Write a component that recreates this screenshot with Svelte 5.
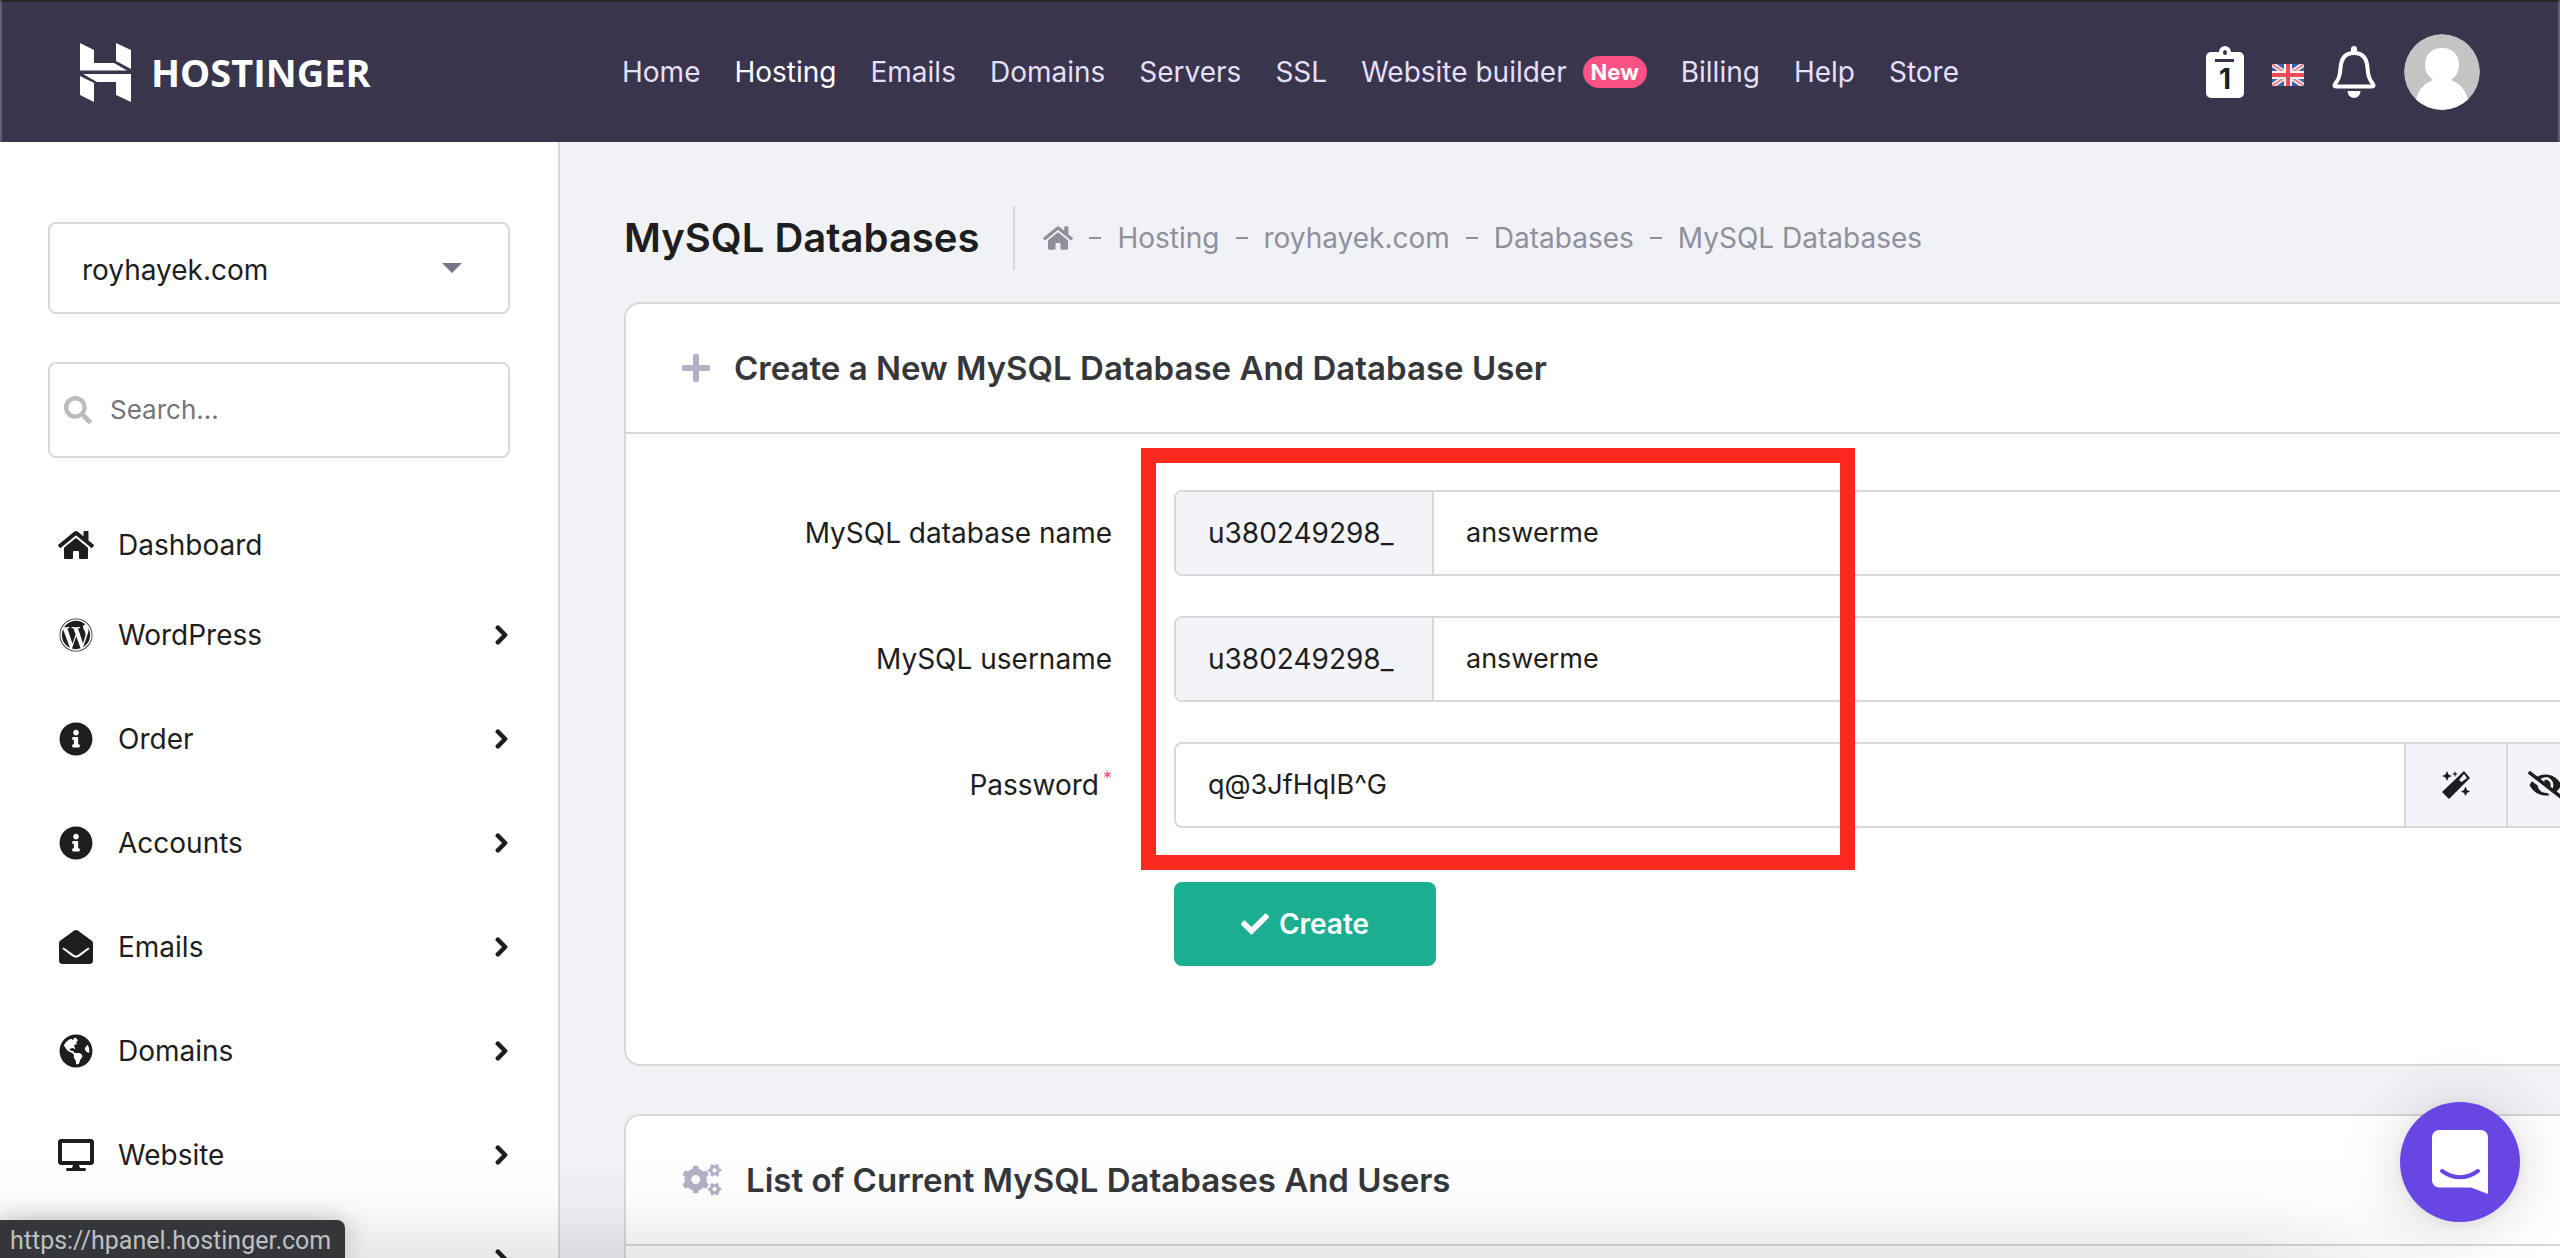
<script>
  const topLinks = [
    { label: 'Home' },
    { label: 'Hosting', active: true },
    { label: 'Emails' },
    { label: 'Domains' },
    { label: 'Servers' },
    { label: 'SSL' },
    { label: 'Website builder', badge: 'New' },
    { label: 'Billing' },
    { label: 'Help' },
    { label: 'Store' }
  ];

  const icons = {
    home: {
      box: '0 0 576 512',
      d: 'M280.37 148.26L96 300.11V464a16 16 0 0 0 16 16l112.06-.29a16 16 0 0 0 15.92-16V368a16 16 0 0 1 16-16h64a16 16 0 0 1 16 16v95.64a16 16 0 0 0 16 16.05L464 480a16 16 0 0 0 16-16V300L295.67 148.26a12.19 12.19 0 0 0-15.3 0zM571.6 251.47L488 182.56V44.05a12 12 0 0 0-12-12h-56a12 12 0 0 0-12 12v72.61L318.47 43a48 48 0 0 0-61 0L4.34 251.47a12 12 0 0 0-1.6 16.9l25.5 31A12 12 0 0 0 45.15 301l235.22-193.74a12.19 12.19 0 0 1 15.3 0L530.9 301a12 12 0 0 0 16.9-1.6l25.5-31a12 12 0 0 0-1.7-16.93z'
    },
    wordpress: {
      box: '0 0 512 512',
      d: 'M61.7 169.4l101.5 278C92.2 413 43.3 340.2 43.3 256c0-30.9 6.6-60.1 18.4-86.6zm337.9 75.9c0-26.3-9.4-44.5-17.5-58.7-10.8-17.5-20.9-32.4-20.9-49.9 0-19.6 14.8-37.8 35.7-37.8.9 0 1.8.1 2.8.2-37.9-34.7-88.3-55.9-143.7-55.9-74.3 0-139.7 38.1-177.8 95.9 5 .2 9.7.3 13.7.3 22.2 0 56.7-2.7 56.7-2.7 11.5-.7 12.8 16.2 1.4 17.5 0 0-11.5 1.3-24.3 2l77.5 230.4L249.8 247l-33.1-90.8c-11.5-.7-22.3-2-22.3-2-11.5-.7-10.1-18.2 1.3-17.5 0 0 35.1 2.7 56 2.7 22.2 0 56.7-2.7 56.7-2.7 11.5-.7 12.8 16.2 1.4 17.5 0 0-11.5 1.3-24.3 2l76.9 228.7 21.2-70.9c9-29.4 16-50.5 16-68.7zm-139.9 29.3l-63.8 185.5c19.1 5.6 39.2 8.7 60.1 8.7 24.8 0 48.5-4.3 70.6-12.1-.6-.9-1.1-1.9-1.5-2.9l-65.4-179.2zm183-120.7c.9 6.8 1.4 14 1.4 21.9 0 21.6-4 45.8-16.2 76.2l-65 187.9C426.2 403 468.7 334.5 468.7 256c0-37-9.4-71.8-26-102.1zM504 256c0 136.8-111.3 248-248 248C119.2 504 8 392.7 8 256 8 119.2 119.2 8 256 8c136.7 0 248 111.2 248 248zm-11.4 0c0-130.5-106.2-236.6-236.6-236.6C125.5 19.4 19.4 125.5 19.4 256S125.6 492.6 256 492.6c130.5 0 236.6-106.1 236.6-236.6z'
    },
    info: {
      box: '0 0 512 512',
      d: 'M256 8C119.043 8 8 119.083 8 256c0 136.997 111.043 248 248 248s248-111.003 248-248C504 119.083 392.957 8 256 8zm0 110c23.196 0 42 18.804 42 42s-18.804 42-42 42-42-18.804-42-42 18.804-42 42-42zm56 254c0 6.627-5.373 12-12 12h-88c-6.627 0-12-5.373-12-12v-24c0-6.627 5.373-12 12-12h12v-64h-12c-6.627 0-12-5.373-12-12v-24c0-6.627 5.373-12 12-12h64c6.627 0 12 5.373 12 12v100h12c6.627 0 12 5.373 12 12v24z'
    },
    envelope: {
      box: '0 0 512 512',
      d: 'M512 464c0 26.51-21.49 48-48 48H48c-26.51 0-48-21.49-48-48V200.724a48 48 0 0 1 18.387-37.776c24.913-19.529 45.501-35.365 164.2-121.511C199.412 29.17 232.797-.347 256 .003c23.198-.354 56.596 29.172 73.413 41.433 118.687 86.137 139.303 101.995 164.2 121.512A48 48 0 0 1 512 200.724V464zm-65.666-196.605c-2.563-3.728-7.7-4.595-11.339-1.907-22.845 16.873-55.462 40.705-105.582 77.079-16.825 12.266-50.21 41.781-73.413 41.43-23.211.344-56.559-29.143-73.413-41.43-50.114-36.37-82.734-60.204-105.582-77.079-3.639-2.688-8.776-1.821-11.339 1.907l-9.072 13.196a7.998 7.998 0 0 0 1.839 10.967c22.887 16.899 55.454 40.69 105.303 76.868 20.274 14.781 56.524 47.813 92.264 47.573 35.724.242 71.961-32.771 92.263-47.573 49.85-36.179 82.418-59.97 105.303-76.868a7.998 7.998 0 0 0 1.839-10.967l-9.071-13.196z'
    },
    globe: {
      box: '-8 0 512 512',
      d: 'M248 8C111.03 8 0 119.03 0 256s111.03 248 248 248 248-111.03 248-248S384.97 8 248 8zm82.29 357.6c-3.9 3.88-7.99 7.95-11.31 11.28-2.99 3-5.1 6.7-6.17 10.71-1.51 5.66-2.73 11.38-4.77 16.87l-17.39 46.85c-13.76 3-28 4.69-42.65 4.69v-27.38c1.69-12.62-7.64-36.26-22.63-51.25-6-6-9.37-14.14-9.37-22.63v-32.01c0-11.64-6.27-22.34-16.46-27.97-14.37-7.95-34.81-19.06-48.81-26.11-11.48-5.78-22.1-13.14-31.65-21.75l-.8-.72a114.792 114.792 0 0 1-18.06-20.74c-9.38-13.77-24.66-36.42-34.59-51.14 20.47-45.5 57.36-82.04 103.2-101.89l24.01 12.01C203.48 89.74 216 82.01 216 70.11v-11.3c7.99-1.29 16.12-2.11 24.39-2.42l28.3 28.3c6.25 6.25 6.25 16.38 0 22.63L264 112l-10.34 10.34c-3.12 3.12-3.12 8.19 0 11.31l4.69 4.69c3.12 3.12 3.12 8.19 0 11.31l-8 8a8.008 8.008 0 0 1-5.66 2.34h-8.99c-2.08 0-4.08.81-5.58 2.27l-9.92 9.65a8.008 8.008 0 0 0-1.58 9.31l15.59 31.19c2.66 5.32-1.21 11.58-7.15 11.58h-5.64c-1.93 0-3.79-.7-5.24-1.96l-9.28-8.06a16.017 16.017 0 0 0-15.55-3.1l-31.17 10.39a11.95 11.95 0 0 0-8.17 11.34c0 4.53 2.56 8.66 6.61 10.69l11.08 5.54c9.41 4.71 19.79 7.16 30.31 7.16s22.59 27.29 32 32h66.75c8.49 0 16.62 3.37 22.63 9.37l13.69 13.69a30.503 30.503 0 0 1 8.93 21.57 46.536 46.536 0 0 1-13.72 32.98zM417 274.25c-5.79-1.45-10.84-5-14.15-9.97l-17.98-26.97a23.97 23.97 0 0 1 0-26.62l19.59-29.38c2.32-3.47 5.5-6.29 9.24-8.15l12.98-6.49C440.2 193.59 448 223.87 448 256c0 8.67-.74 17.16-1.82 25.54L417 274.25z'
    },
    desktop: {
      box: '0 0 576 512',
      d: 'M528 0H48C21.5 0 0 21.5 0 48v320c0 26.5 21.5 48 48 48h192l-16 48h-72c-13.3 0-24 10.7-24 24s10.7 24 24 24h272c13.3 0 24-10.7 24-24s-10.7-24-24-24h-72l-16-48h192c26.5 0 48-21.5 48-48V48c0-26.5-21.5-48-48-48zm-16 352H64V64h448v288z'
    },
    search: {
      box: '0 0 512 512',
      d: 'M505 442.7L405.3 343c-4.5-4.5-10.6-7-17-7H372c27.6-35.3 44-79.7 44-128C416 93.1 322.9 0 208 0S0 93.1 0 208s93.1 208 208 208c48.3 0 92.7-16.4 128-44v16.3c0 6.4 2.5 12.5 7 17l99.7 99.7c9.4 9.4 24.6 9.4 33.9 0l28.3-28.3c9.4-9.4 9.4-24.6.1-34zM208 336c-70.7 0-128-57.2-128-128 0-70.7 57.2-128 128-128 70.7 0 128 57.2 128 128 0 70.7-57.2 128-128 128z'
    },
    check: {
      box: '0 0 512 512',
      d: 'M173.898 439.404l-166.4-166.4c-9.997-9.997-9.997-26.206 0-36.204l36.203-36.204c9.997-9.998 26.207-9.998 36.204 0L192 312.69 432.095 72.596c9.997-9.997 26.207-9.997 36.204 0l36.203 36.204c9.997 9.997 9.997 26.206 0 36.204l-294.4 294.401c-9.998 9.997-26.207 9.997-36.204-.001z'
    },
    plus: {
      box: '0 0 448 512',
      d: 'M416 208H272V64c0-17.67-14.33-32-32-32h-32c-17.67 0-32 14.33-32 32v144H32c-17.67 0-32 14.33-32 32v32c0 17.67 14.33 32 32 32h144v144c0 17.67 14.33 32 32 32h32c17.67 0 32-14.33 32-32V304h144c17.67 0 32-14.33 32-32v-32c0-17.67-14.33-32-32-32z'
    },
    eyeSlash: {
      box: '0 0 640 512',
      d: 'M320 400c-75.85 0-137.25-58.71-142.9-133.11L72.2 185.82c-13.79 17.3-26.48 35.59-36.72 55.59a32.35 32.35 0 0 0 0 29.19C89.71 376.41 197.07 448 320 448c26.91 0 52.87-4 77.89-10.46L346 397.39a144.13 144.13 0 0 1-26 2.61zm313.82 58.1l-110.55-85.44a331.25 331.25 0 0 0 81.25-102.07 32.35 32.35 0 0 0 0-29.19C550.29 135.59 442.93 64 320 64a308.15 308.15 0 0 0-147.32 37.7L45.46 3.37A16 16 0 0 0 23 6.18L3.37 31.45A16 16 0 0 0 6.18 53.9l588.36 454.73a16 16 0 0 0 22.46-2.81l19.64-25.27a16 16 0 0 0-2.82-22.45zm-183.72-142l-39.3-30.38A94.75 94.75 0 0 0 416 256a94.76 94.76 0 0 0-121.31-92.21A47.65 47.65 0 0 1 304 192a46.64 46.64 0 0 1-1.54 10l-73.61-56.89A142.31 142.31 0 0 1 320 112a143.92 143.92 0 0 1 144 144c0 21.63-5.29 41.79-13.9 60.11z'
    }
  };

  const sideLinks = [
    { label: 'Dashboard', icon: 'home', flat: true },
    { label: 'WordPress', icon: 'wordpress' },
    { label: 'Order', icon: 'info' },
    { label: 'Accounts', icon: 'info' },
    { label: 'Emails', icon: 'envelope' },
    { label: 'Domains', icon: 'globe' },
    { label: 'Website', icon: 'desktop' },
    { label: '' }
  ];

  const crumbs = ['Hosting', 'royhayek.com', 'Databases', 'MySQL Databases'];

  // Outline of a gear with evenly spaced teeth and a round hole in the middle.
  function gear(cx, cy, outer, inner, hole, teeth, turn = 0) {
    const points = [];
    const step = (Math.PI * 2) / teeth;
    for (let i = 0; i < teeth; i++) {
      const a = i * step - Math.PI / 2 + turn;
      for (const [offset, radius] of [[-0.26, inner], [-0.17, outer], [0.17, outer], [0.26, inner], [0.5, inner]]) {
        const t = a + offset * step;
        points.push(`${(cx + radius * Math.cos(t)).toFixed(2)} ${(cy + radius * Math.sin(t)).toFixed(2)}`);
      }
    }
    return `M${points.join('L')}ZM${cx - hole} ${cy}a${hole} ${hole} 0 1 0 ${hole * 2} 0a${hole} ${hole} 0 1 0 ${-hole * 2} 0Z`;
  }
  const gears = gear(13.5, 16, 14.5, 11.5, 4.6, 6) + gear(33, 6.5, 7, 5.4, 2.2, 6, 0.5) + gear(33, 26, 7, 5.4, 2.2, 6, 0.5);

  let databaseName = $state('answerme');
  let username = $state('answerme');
  let password = $state('q@3JfHqIB^G');
</script>

{#snippet icon(name)}
  <svg class="icon" viewBox={icons[name].box} aria-hidden="true"><path d={icons[name].d} /></svg>
{/snippet}

<div class="app">
  <header class="topbar">
    <a class="logo" href="#home">
      <svg viewBox="0 0 51 59" aria-hidden="true">
        <path d="M0 0L14 7V20H34L47 27.5H0ZM36 0L51 7V26L36 18ZM3 31H51V59L36 52V39H17ZM0 33L14 40V59L0 52Z" />
      </svg>
      <span>HOSTINGER</span>
    </a>
    <nav class="topnav">
      {#each topLinks as link}
        <a href="#top" class:active={link.active}>
          {link.label}{#if link.badge}<span class="badge">{link.badge}</span>{/if}
        </a>
      {/each}
    </nav>
    <div class="tools">
      <button class="clipboard" aria-label="Tasks">
        <svg viewBox="0 0 38 52" aria-hidden="true">
          <path fill-rule="evenodd" d="M5 6H13A6 6 0 0 1 25 6H33A5 5 0 0 1 38 11V47A5 5 0 0 1 33 52H5A5 5 0 0 1 0 47V11A5 5 0 0 1 5 6ZM19 4A2 2.5 0 0 0 19 9A2 2.5 0 0 0 19 4ZM9 13V16H28V13Z" />
        </svg>
        <span>1</span>
      </button>
      <button class="flag" aria-label="Language">
        <svg viewBox="0 0 32 22" aria-hidden="true">
          <rect width="32" height="22" fill="#3f5fa8" />
          <path d="M0 0L32 22M32 0L0 22" stroke="#f4f4fa" stroke-width="5" />
          <path d="M0 0L32 22M32 0L0 22" stroke="#ee7d86" stroke-width="2" />
          <path d="M16 0V22M0 11H32" stroke="#f8f4f8" stroke-width="8" />
          <path d="M16 0V22M0 11H32" stroke="#ef4b57" stroke-width="4" />
        </svg>
      </button>
      <button class="bell" aria-label="Notifications">
        <svg viewBox="0 0 44 52" aria-hidden="true">
          <path d="M22 7C12 7 9 14 8.500 22C8 31 6 34 3 38Q1.500 40.500 4 40.500H40Q42.500 40.500 41 38C38 34 36 31 35.500 22C35 14 32 7 22 7Z" fill="none" stroke="#fff" stroke-width="4" stroke-linejoin="round" />
          <path d="M19 8V3A3 3 0 0 1 25 3V8ZM15.500 45H28.500A6.500 7 0 0 1 15.500 45Z" />
        </svg>
      </button>
      <button class="avatar" aria-label="Account">
        <svg viewBox="0 0 76 76" aria-hidden="true">
          <defs><clipPath id="round"><circle cx="38" cy="38" r="38" /></clipPath></defs>
          <g clip-path="url(#round)">
            <circle cx="38" cy="38" r="38" fill="#c4c4c4" />
            <path d="M38 14C49 14 55 21 55 31C55 38 51 43 47 46C58 50 62 58 64 66V76H12V66C14 58 18 50 29 46C25 43 21 38 21 31C21 21 27 14 38 14Z" />
          </g>
        </svg>
      </button>
    </div>
  </header>

  <div class="body">
    <aside class="sidebar">
      <div class="picker">
        <select aria-label="Website">
          <option>royhayek.com</option>
        </select>
        <svg class="caret" viewBox="0 0 20 10" aria-hidden="true"><path d="M0 0H20L10 10Z" /></svg>
      </div>
      <label class="search">
        {@render icon('search')}
        <input type="search" placeholder="Search..." aria-label="Search" />
      </label>
      <nav class="menu">
        {#each sideLinks as link}
          <a href="#side" class:flat={link.flat} aria-label={link.label || 'More'}>
            <span class="menu-icon">
              {#if link.icon}{@render icon(link.icon)}{/if}
            </span>
            <span class="menu-label">{link.label}</span>
            {#if !link.flat}
              <svg class="chevron" viewBox="0 0 14 22" aria-hidden="true"><path d="M3 3L11 11L3 19" /></svg>
            {/if}
          </a>
        {/each}
      </nav>
    </aside>

    <main>
      <div class="heading">
        <h1>MySQL Databases</h1>
        <nav class="crumbs" aria-label="Breadcrumb">
          <a class="crumb-home" href="#home" aria-label="Home">{@render icon('home')}</a>
          {#each crumbs as crumb}
            <span class="dash"></span>
            <a href="#crumb">{crumb}</a>
          {/each}
        </nav>
      </div>

      <section class="card">
        <div class="card-head">
          <span class="head-icon plus">{@render icon('plus')}</span>
          <h2>Create a New MySQL Database And Database User</h2>
        </div>
        <form class="form" onsubmit={(event) => event.preventDefault()}>
          <label for="db-name">MySQL database name</label>
          <div class="group">
            <span class="prefix">u380249298_</span>
            <input id="db-name" type="text" bind:value={databaseName} />
          </div>
          <label for="db-user">MySQL username</label>
          <div class="group">
            <span class="prefix">u380249298_</span>
            <input id="db-user" type="text" bind:value={username} />
          </div>
          <label for="db-pass">Password<sup>*</sup></label>
          <div class="group">
            <input id="db-pass" type="text" bind:value={password} />
            <button type="button" class="wand" aria-label="Generate password">
              <svg viewBox="0 0 28 28" aria-hidden="true">
                <path fill-rule="evenodd" d="M22 0L28 7L7 28L0 21ZM22 3L17 9L19.500 11L25 7Z" />
                <path d="M5 0L6.500 3.500L10 5L6.500 6.500L5 10L3.500 6.500L0 5L3.500 3.500ZM13 0L13.800 2.200L16 3L13.800 3.800L13 6L12.200 3.800L10 3L12.200 2.200ZM23.500 15.500L25 19L28 20.500L25 22L23.500 25L22 22L19 20.500L22 19Z" />
              </svg>
            </button>
            <button type="button" class="eye" aria-label="Hide password">{@render icon('eyeSlash')}</button>
          </div>
          <button type="submit" class="create">{@render icon('check')}Create</button>
          <div class="highlight"></div>
        </form>
      </section>

      <section class="card">
        <div class="card-head">
          <span class="head-icon cogs">
            <svg class="icon" viewBox="0 0 40 33" aria-hidden="true"><path fill-rule="evenodd" d={gears} /></svg>
          </span>
          <h2>List of Current MySQL Databases And Users</h2>
        </div>
        <div class="list"></div>
      </section>
    </main>
  </div>

  <div class="shade"></div>
  <div class="status">https://hpanel.hostinger.com</div>
  <button class="chat" aria-label="Open chat">
    <svg viewBox="0 0 56 64" aria-hidden="true">
      <path d="M7 0H49A7 7 0 0 1 56 7V64L39 57.500H7A7 7 0 0 1 0 50.500V7A7 7 0 0 1 7 0Z" />
      <path class="smile" d="M10 41Q28 53.500 46 41" />
    </svg>
  </button>
</div>

<style>
  :global(body) {
    margin: 0;
    background: #f1f2f6;
  }
  .app {
    height: 100vh;
    overflow: hidden;
    position: relative;
    display: flex;
    flex-direction: column;
    box-sizing: border-box;
    background: #f1f2f6;
    color: #1d1e20;
    font-family: Inter, 'Liberation Sans', sans-serif;
    font-size: 28px;
    line-height: 40px;
  }
  .app :global(*) {
    box-sizing: border-box;
  }
  svg {
    display: block;
    fill: currentColor;
  }
  a {
    color: inherit;
    text-decoration: none;
  }
  button,
  input,
  select {
    font: inherit;
    color: inherit;
    border: 0;
    padding: 0;
    margin: 0;
    background: none;
    outline: none;
  }
  .icon {
    width: 100%;
    height: 100%;
  }

  .topbar {
    flex: none;
    height: 142px;
    display: flex;
    align-items: center;
    padding: 0 78px;
    background: #38354c;
    border: solid #62606f;
    border-width: 2px 2px 0;
    border-top-color: #262827;
    color: #fff;
  }
  .logo {
    width: 542px;
    display: flex;
    align-items: center;
    gap: 20px;
    font-family: 'Open Sans', sans-serif;
    font-weight: 700;
    font-size: 38px;
  }
  .logo svg {
    width: 51px;
    height: 59px;
  }
  .topnav {
    display: flex;
    gap: 34px;
    color: #e6dffb;
    white-space: nowrap;
  }
  .topnav .active {
    color: #fff;
  }
  .topnav a {
    display: flex;
    align-items: center;
  }
  .badge {
    margin-left: 16px;
    width: 64px;
    height: 32px;
    border-radius: 16px;
    background: #fc5185;
    color: #fff;
    font-size: 22px;
    font-weight: 700;
    line-height: 32px;
    text-align: center;
  }
  .tools {
    margin-left: auto;
    display: flex;
    align-items: center;
    gap: 28px;
  }
  .clipboard {
    display: grid;
    place-items: center;
  }
  .clipboard svg {
    grid-area: 1 / 1;
    width: 38px;
    height: 52px;
  }
  .clipboard span {
    grid-area: 1 / 1;
    padding-top: 14px;
    color: #1d1e20;
    font-weight: 700;
    line-height: 28px;
  }
  .flag {
    padding-top: 6px;
  }
  .flag svg {
    width: 32px;
    height: 22px;
  }
  .bell svg {
    width: 44px;
    height: 52px;
  }
  .avatar svg {
    width: 76px;
    height: 76px;
  }

  .body {
    flex: 1;
    min-height: 0;
    display: flex;
  }
  .sidebar {
    flex: none;
    width: 560px;
    padding: 80px 48px 0;
    background: #fff;
    border-right: 2px solid #d8d8d8;
    overflow: hidden;
  }
  .picker,
  .search {
    display: flex;
    align-items: center;
    border: 2px solid #d8d8d8;
    border-radius: 8px;
  }
  .picker {
    position: relative;
    height: 92px;
  }
  .picker select {
    appearance: none;
    width: 100%;
    height: 100%;
    padding: 4px 32px 0;
  }
  .caret {
    position: absolute;
    right: 46px;
    width: 20px;
    height: 10px;
    color: #75768c;
    pointer-events: none;
  }
  .search {
    margin-top: 48px;
    height: 96px;
    padding: 0 14px;
    gap: 18px;
    color: #b9bac2;
  }
  .search .icon {
    flex: none;
    width: 28px;
    height: 28px;
  }
  .search input {
    flex: 1;
    min-width: 0;
    font-size: 26px;
  }
  .search input::placeholder {
    color: #757575;
    opacity: 1;
  }
  .menu {
    margin-top: 49px;
  }
  .menu a {
    display: flex;
    align-items: center;
    height: 104px;
    padding: 0 2px 0 10px;
    gap: 24px;
  }
  .menu a.flat {
    height: 76px;
  }
  .menu-icon {
    flex: none;
    width: 36px;
    height: 34px;
  }
  .menu-label {
    flex: 1;
  }
  .chevron {
    width: 13px;
    height: 20px;
    fill: none;
    stroke: currentColor;
    stroke-width: 5;
    stroke-linecap: round;
    stroke-linejoin: round;
  }

  main {
    flex: 1;
    min-width: 0;
    padding-left: 64px;
    overflow: hidden;
  }
  .heading {
    display: flex;
    align-items: center;
    padding: 64px 0 32px;
    white-space: nowrap;
  }
  h1,
  h2 {
    margin: 0;
    font-weight: 600;
  }
  h1 {
    padding-right: 34px;
    border-right: 2px solid #d8d8d8;
    font-size: 40px;
    line-height: 64px;
  }
  .crumbs {
    display: flex;
    align-items: center;
    gap: 16px;
    padding-left: 28px;
    color: #8f909c;
  }
  .crumb-home {
    width: 30px;
    height: 28px;
  }
  .dash {
    width: 12px;
    height: 2px;
    background: #8f909c;
  }
  .card {
    margin-right: -64px;
    margin-bottom: 48px;
    background: #fff;
    border: 2px solid #d8d8d8;
    border-radius: 16px;
  }
  .card-head {
    display: flex;
    align-items: center;
    gap: 24px;
    height: 130px;
    padding: 0 56px;
    border-bottom: 2px solid #d8d8d8;
    white-space: nowrap;
  }
  .head-icon {
    height: 32px;
    color: #b1b1c7;
  }
  .plus {
    width: 28px;
  }
  .cogs {
    width: 40px;
  }
  h2 {
    color: #36373b;
    font-size: 33px;
  }
  .form {
    position: relative;
    display: grid;
    grid-template-columns: 486px 1fr;
    column-gap: 62px;
    row-gap: 40px;
    align-items: center;
    padding: 56px 38px 98px 0;
  }
  .form label {
    text-align: right;
  }
  sup {
    margin-left: 4px;
    color: #fc5185;
    font-size: 18px;
    line-height: 0;
    vertical-align: 10px;
  }
  .group {
    display: flex;
    height: 86px;
    border: 2px solid #d8d8d8;
    border-radius: 8px;
    overflow: hidden;
  }
  .group input {
    flex: 1;
    min-width: 0;
    padding: 0 32px;
    font-size: 27px;
  }
  .prefix {
    width: 258px;
    padding: 0 32px;
    background: #f3f4f9;
    border-right: 2px solid #d8d8d8;
    line-height: 82px;
  }
  .group button {
    display: grid;
    place-items: center;
    background: #f3f4f9;
    border-left: 2px solid #d8d8d8;
  }
  .wand {
    width: 102px;
  }
  .wand svg {
    width: 28px;
    height: 28px;
  }
  .group .eye {
    width: 76px;
  }
  .eye .icon {
    width: 35px;
    height: 28px;
  }
  .create {
    grid-column: 2;
    justify-self: start;
    display: flex;
    align-items: center;
    justify-content: center;
    gap: 10px;
    width: 262px;
    height: 84px;
    margin-top: 14px;
    border-radius: 8px;
    background: #1cae91;
    color: #fff;
    font-weight: 600;
  }
  .create .icon {
    width: 28px;
    height: 28px;
  }
  .highlight {
    position: absolute;
    left: 515px;
    top: 14px;
    width: 714px;
    height: 422px;
    border: 15px solid #fc2a1e;
    pointer-events: none;
  }
  .list {
    height: 200px;
  }

  .shade {
    position: absolute;
    left: 0;
    right: 80px;
    bottom: 0;
    height: 100px;
    background: linear-gradient(to bottom, transparent, rgba(0, 0, 0, 0.02) 45%, rgba(0, 0, 0, 0.09));
    mask-image: linear-gradient(to left, transparent, #000 240px);
    pointer-events: none;
  }
  .status {
    position: absolute;
    left: 0;
    bottom: 0;
    height: 38px;
    padding: 0 14px 0 10px;
    border-top-right-radius: 8px;
    background: #35363a;
    color: #bdc1c6;
    box-shadow: 0 0 24px rgba(0, 0, 0, 0.25);
    font-family: Roboto, sans-serif;
    font-size: 25px;
    line-height: 42px;
  }
  .chat {
    position: absolute;
    right: 40px;
    bottom: 36px;
    width: 120px;
    height: 120px;
    display: grid;
    place-items: center;
    border-radius: 50%;
    background: #6846e3;
    box-shadow: 0 2px 12px rgba(0, 0, 0, 0.06), 0 4px 64px rgba(0, 0, 0, 0.16);
    color: #fff;
  }
  .chat svg {
    width: 56px;
    height: 64px;
  }
  .smile {
    fill: none;
    stroke: #6846e3;
    stroke-width: 4;
    stroke-linecap: round;
  }
</style>
